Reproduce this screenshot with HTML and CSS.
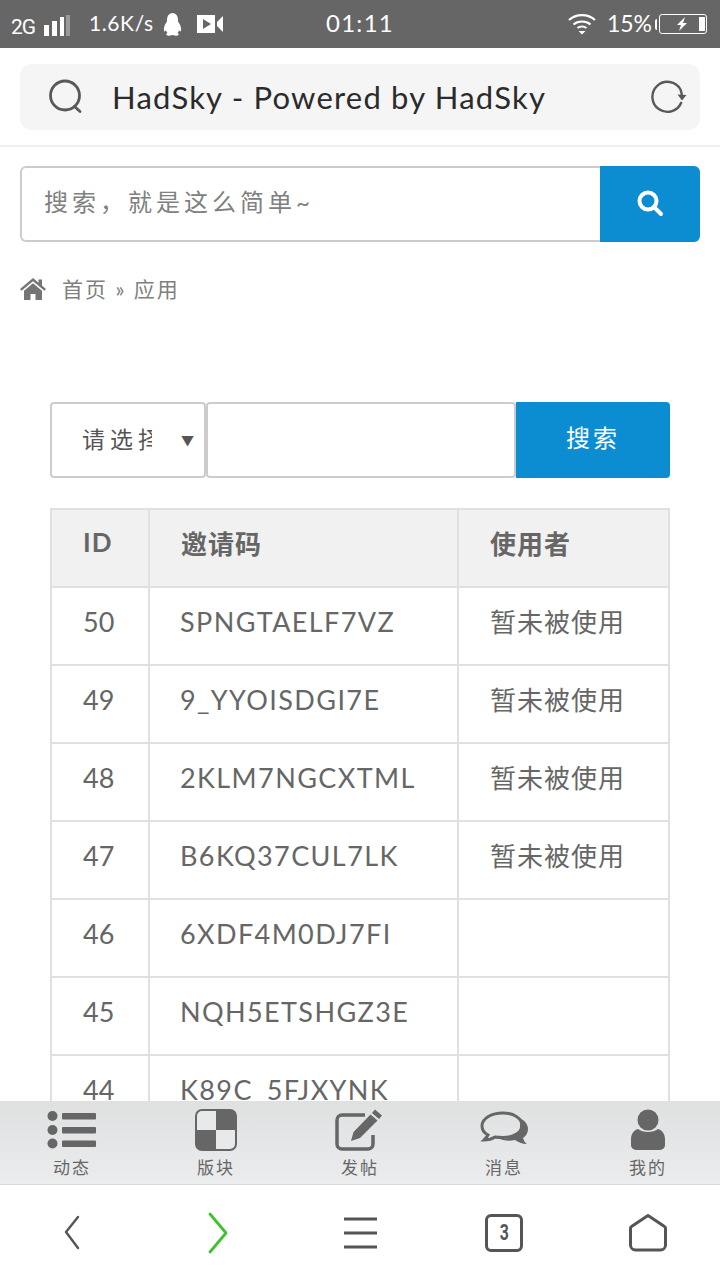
FILE: index.html
```html
<!DOCTYPE html>
<html lang="zh-CN">
<head>
<meta charset="utf-8">
<title>HadSky</title>
<link rel="stylesheet" href="styles.css">
</head>
<body>
<div class="phone">
  <div class="status">
    <div class="status-left">
      <span class="net">2G</span>
      <svg class="sig" width="28" height="24" viewBox="0 0 28 24"><rect x="1" y="11" width="5" height="11" fill="#fff"/><rect x="9" y="7" width="5" height="15" fill="#fff"/><rect x="17" y="3" width="4" height="19" fill="#fff"/><rect x="23" y="1" width="4" height="21" fill="#999"/></svg>
      <span class="speed">1.6K/s</span>
      <svg class="qq" width="20" height="23" viewBox="0 0 20 23"><path d="M10 0c4 0 6 3 6 7 0 1 0 2 1 3 1.500 2 2.500 5 2 8-.5 1-1.500 0-2-1 0 1-.5 2-1.500 3 1 .5 1.500 1 1 2-1 1-4 1-5.500 0h-1c-1.500 1-4.500 1-5.500 0-.5-1 0-1.500 1-2-1-1-1.500-2-1.500-3-.5 1-1.500 2-2 1-.5-3 .5-6 2-8 1-1 1-2 1-3 0-4 2-7 6-7z" fill="#fff"/></svg>
      <svg class="cam" width="27" height="18" viewBox="0 0 27 18"><path d="M0 0h18v18H0zM6 4v10l8-5z" fill="#fff" fill-rule="evenodd"/><path d="M20 7l6-6v16l-6-6z" fill="#fff"/></svg>
    </div>
    <div class="clock">01:11</div>
    <div class="status-right">
      <svg width="28" height="22" viewBox="0 0 28 22" fill="none" stroke="#fff" stroke-width="2.200"><path d="M1 7c7-6.500 19-6.500 26 0"/><path d="M5.500 11.500c4.500-4 12.500-4 17 0"/><path d="M9.500 15c2.500-2 6.500-2 9 0"/><path d="M10.500 18h7l-3.500 3.500z" fill="#fff" stroke="none"/></svg>
      <span class="pct">15%</span>
      <span class="nub"></span>
      <div class="battery">
        <svg class="bolt" width="12" height="14" viewBox="0 0 12 14"><path d="M9 0L1 8h4l-2 6 8-8H7z" fill="#fff"/></svg>
        <span class="charge"></span>
      </div>
    </div>
  </div>

  <div class="address-wrap">
    <div class="address">
      <svg width="36" height="36" viewBox="0 0 36 36" fill="none" stroke="#595959" stroke-width="2.800"><circle cx="17" cy="16.500" r="14.500"/><path d="M26.500 27.500l5.500 5" stroke-linecap="round"/></svg>
      <span class="page-title">HadSky - Powered by HadSky</span>
      <svg width="36" height="36" viewBox="0 0 36 36" fill="none" stroke="#595959" stroke-width="2.400"><path d="M30.500 23A15 15 0 1 1 29.500 10.500L31 16"/><path d="M26.500 15.500l9 .5-4.500 5.500z" fill="#595959" stroke="none"/></svg>
    </div>
  </div>

  <main class="content">
    <div class="site-search">
      <div class="site-input">搜索，就是这么简单~</div>
      <div class="site-btn">
        <svg width="28" height="28" viewBox="0 0 28 28" fill="none" stroke="#fff" stroke-width="4"><circle cx="12" cy="12" r="8.500"/><path d="M18 18l7 7" stroke-linecap="round"/></svg>
      </div>
    </div>
    <div class="crumbs">
      <svg width="26" height="22" viewBox="0 0 26 22"><path d="M13 0L0 11l1.500 1.800L13 3.200l11.500 9.600L26 11l-4-3.400V1.500h-3.500v3.200z" fill="#757575"/><path d="M13 5.200L4 12.800V22h6.500v-6h5v6H22v-9.200z" fill="#757575"/></svg>
      <span class="crumb-text">首页 » 应用</span>
    </div>

    <div class="filter">
      <div class="select"><span class="select-text">请选择</span><span class="arrow">▼</span></div>
      <div class="query"></div>
      <div class="go">搜索</div>
    </div>

    <table class="codes">
      <thead><tr><th class="c1">ID</th><th class="c2">邀请码</th><th class="c3">使用者</th></tr></thead>
      <tbody>
        <tr><td>50</td><td class="code">SPNGTAELF7VZ</td><td class="used">暂未被使用</td></tr>
        <tr><td>49</td><td class="code">9_YYOISDGI7E</td><td class="used">暂未被使用</td></tr>
        <tr><td>48</td><td class="code">2KLM7NGCXTML</td><td class="used">暂未被使用</td></tr>
        <tr><td>47</td><td class="code">B6KQ37CUL7LK</td><td class="used">暂未被使用</td></tr>
        <tr><td>46</td><td class="code">6XDF4M0DJ7FI</td><td></td></tr>
        <tr><td>45</td><td class="code">NQH5ETSHGZ3E</td><td></td></tr>
        <tr><td>44</td><td class="code">K89C_5FJXYNK</td><td></td></tr>
      </tbody>
    </table>
  </main>

  <nav class="tabs">
    <div class="tab">
      <svg width="50" height="42" viewBox="0 0 50 42" fill="#666"><circle cx="5.500" cy="7" r="5"/><circle cx="5.500" cy="21" r="5"/><circle cx="5.500" cy="34.500" r="5"/><rect x="15" y="4" width="34" height="6.500" rx="1"/><rect x="15" y="18" width="34" height="6.500" rx="1"/><rect x="15" y="31.500" width="34" height="6.500" rx="1"/></svg>
      <span>动态</span>
    </div>
    <div class="tab">
      <svg width="42" height="42" viewBox="0 0 42 42"><rect x="1" y="1" width="40" height="40" rx="6" fill="#e8e9ea" stroke="#666" stroke-width="2"/><path d="M21 1h14a6 6 0 0 1 6 6v14H21zM1 21h20v20H7a6 6 0 0 1-6-6z" fill="#666"/></svg>
      <span>版块</span>
    </div>
    <div class="tab">
      <svg width="50" height="42" viewBox="0 0 50 42"><path d="M38 26v9a5 5 0 0 1-5 5H7a5 5 0 0 1-5-5V11a5 5 0 0 1 5-5h23" fill="none" stroke="#666" stroke-width="3.500"/><path d="M40 0.500l7 6-3 3.500-7-6zM35.500 5.500l7 6L25 29l-9 3 2.500-9z" fill="#666"/></svg>
      <span>发帖</span>
    </div>
    <div class="tab">
      <svg width="50" height="42" viewBox="0 0 50 42"><path d="M24 4c-11 0-21 5-21 13 0 4 2 7 6 9-1 2-2 3-4 5 4 0 8-1 11-3 3 .5 5 .5 8 .5 11 0 19-5 19-12S35 4 24 4z" fill="none" stroke="#666" stroke-width="3"/><path d="M40 9c6 2 9 7 9 11 0 4-2 7-5 9 1 3 2 5 4 6-5 0-9-2-12-4-5 1-10 1-15-1 12 0 24-4 19-21z" fill="#666"/></svg>
      <span>消息</span>
    </div>
    <div class="tab">
      <svg width="36" height="42" viewBox="0 0 36 42" fill="#666"><circle cx="18" cy="11" r="10.500"/><path d="M8 20c5 4 15 4 20 0 4 1 7 5 7 10v6a5 5 0 0 1-5 5H6a5 5 0 0 1-5-5v-6c0-5 3-9 7-10z"/></svg>
      <span>我的</span>
    </div>
  </nav>

  <div class="browser">
    <svg width="72" height="48" viewBox="0 0 72 48" fill="none" stroke="#555" stroke-width="2.400"><path d="M42 8L30 23l12 16" stroke-linecap="round" stroke-linejoin="round"/></svg>
    <svg width="72" height="48" viewBox="0 0 72 48" fill="none" stroke="#3fc22f" stroke-width="2.800"><path d="M30 5l16 19-16 19" stroke-linecap="round" stroke-linejoin="round"/></svg>
    <svg width="72" height="48" viewBox="0 0 72 48" stroke="#555" stroke-width="3"><path d="M20 10h33M20 24h33M20 38h33"/></svg>
    <div class="tabs-count"><span class="count-digit">3</span></div>
    <svg width="72" height="48" viewBox="0 0 72 48" fill="none" stroke="#555" stroke-width="3"><path d="M36 6.500l16.500 11a2 2 0 0 1 1 2V36a5 5 0 0 1-5 5H23.500a5 5 0 0 1-5-5V19.500a2 2 0 0 1 1-2z" stroke-linejoin="round"/></svg>
  </div>
</div>
</body>
</html>
```

FILE: styles.css
```css
* { box-sizing: border-box; }
html, body { margin: 0; padding: 0; }
body {
  width: 720px;
  height: 1280px;
  overflow: hidden;
  background: #fff;
  font-family: "Lato", "Noto Sans CJK SC", sans-serif;
}
.phone { display: flex; flex-direction: column; height: 1280px; }

.status {
  height: 48px;
  flex: none;
  background: #666;
  color: #fff;
  display: grid;
  grid-template-columns: 1fr auto 1fr;
  align-items: center;
}
.status-left { display: flex; align-items: center; padding-left: 11px; }
.net { font: 21px/24px "Roboto", sans-serif; letter-spacing: -1px; margin-top: 5px; width: 32px; }
.sig { margin-top: 3px; }
.speed { font: 21px/24px "Lato", sans-serif; letter-spacing: .6px; margin-left: 18px; width: 66px; margin-top: -2px; }
.qq { margin-left: 7px; }
.cam { margin-left: 15px; margin-top: -1px; }
.clock { font: 24px/28px "Lato", sans-serif; letter-spacing: 1.300px; padding-bottom: 3px; }
.status-right { display: flex; align-items: center; justify-content: flex-end; padding-right: 13px; }
.pct { font: 23px/28px "Lato", sans-serif; margin-left: 11px; padding-bottom: 2px; }
.nub { width: 2px; height: 11px; background: #fff; border-radius: 2px 0 0 2px; margin-left: 3px; }
.battery {
  width: 48px; height: 20px; margin-left: 2px;
  border: 1.500px solid #fff; border-radius: 3px;
  display: flex; align-items: center; justify-content: flex-end; padding-right: 1px;
  gap: 11px;
}
.charge { width: 6px; height: 14px; background: #fff; }

.address-wrap {
  flex: none;
  height: 99px;
  padding: 16px 20px 0;
  border-bottom: 2px solid #eee;
}
.address {
  height: 66px;
  background: #f5f5f5;
  border-radius: 12px;
  padding: 0 13px 0 28px;
  display: flex; align-items: center;
}
.page-title { flex: 1; margin-left: 28px; font-size: 31px; letter-spacing: 1.200px; color: #2b2b2b; white-space: nowrap; padding-bottom: 1px; }

.content { flex: 1; min-height: 0; overflow: hidden; padding: 19px 20px 0; }
.site-search { display: flex; height: 76px; }
.site-input {
  flex: 1;
  border: 2px solid #ccc; border-right: 0;
  border-radius: 6px 0 0 6px;
  padding-left: 22px;
  line-height: 68px;
  font-size: 24px; letter-spacing: 4px; color: #808080;
}
.site-btn {
  width: 100px; background: #0c8dd2; border-radius: 0 6px 6px 0;
  display: flex; align-items: center; justify-content: center; padding-bottom: 2px;
}
.crumbs { display: flex; align-items: center; height: 48px; margin-top: 23px; gap: 16px; }
.crumb-text { font-size: 21px; letter-spacing: 2px; color: #808080; padding-bottom: 2px; }

.filter { display: flex; height: 76px; margin: 89px 30px 30px; }
.select {
  width: 156px; border: 2px solid #ccc; border-radius: 4px;
  display: flex; align-items: center; padding-left: 30px; color: #555;
}
.select-text { width: 70px; overflow: hidden; white-space: nowrap; font-size: 23px; letter-spacing: 5px; padding-bottom: 5px; }
.arrow { margin-left: 29px; font-size: 13px; color: #555; padding-bottom: 2px; }
.query { flex: 1; border: 2px solid #ccc; border-radius: 4px; }
.go {
  width: 154px; background: #0c8dd2; color: #fff; border-radius: 0 4px 4px 0;
  display: flex; align-items: center; justify-content: center;
  font-size: 24px; letter-spacing: 3px; padding-bottom: 8px;
}

.codes {
  width: 620px; margin-left: 30px;
  border-collapse: collapse; table-layout: fixed;
  font-size: 27px; color: #666;
}
.codes th, .codes td {
  height: 78px;
  border: 2px solid #e0e0e0;
  padding: 0 0 9px 31px;
  text-align: left;
  white-space: nowrap;
  overflow: hidden;
}
.codes th { background: #f1f1f1; font-weight: 700; font-size: 26px; letter-spacing: 1px; padding-bottom: 12px; }
.c1 { width: 98px; }
.c2 { width: 309px; }
.codes td.code { letter-spacing: 1.400px; padding-left: 30px; }
.codes td.used { font-size: 26px; letter-spacing: 1px; padding-bottom: 11px; }

.tabs {
  flex: none; height: 84px;
  background: linear-gradient(#dfe0e0, #ebecee);
  border-bottom: 1px solid #d8d8d8;
  display: grid; grid-template-columns: repeat(5, 144px);
  padding-top: 8px;
}
.tab { display: flex; flex-direction: column; align-items: center; }
.tab span { font-size: 17px; line-height: 22px; letter-spacing: 2px; color: #666; margin-top: 6px; }

.browser {
  flex: none; height: 95px; background: #fff;
  display: grid; grid-template-columns: repeat(5, 144px);
  justify-items: center; align-items: center;
}
.tabs-count {
  width: 38px; height: 38px; border: 3px solid #555; border-radius: 6px;
  display: flex; align-items: center; justify-content: center;
  font: 700 22px/1 "Roboto", sans-serif; color: #555;
}
.count-digit { transform: scaleX(.72); }
```
